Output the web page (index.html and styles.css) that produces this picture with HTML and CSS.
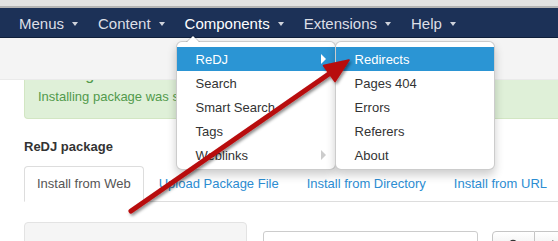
FILE: index.html
```html
<!DOCTYPE html>
<html>
<head>
<meta charset="utf-8">
<link rel="stylesheet" href="styles.css">
</head>
<body>
<div class="topstrip"></div>
<nav class="navbar">
  <ul class="nav">
    <li class="nav-item"><span>Menus</span><b class="caret"></b></li>
    <li class="nav-item"><span>Content</span><b class="caret"></b></li>
    <li class="nav-item open"><span>Components</span><b class="caret"></b>
      <ul class="dropdown">
        <li class="dd-item active has-sub"><span>ReDJ</span><b class="sub-caret"></b>
          <ul class="dropdown submenu">
            <li class="dd-item active"><span>Redirects</span></li>
            <li class="dd-item"><span>Pages 404</span></li>
            <li class="dd-item"><span>Errors</span></li>
            <li class="dd-item"><span>Referers</span></li>
            <li class="dd-item"><span>About</span></li>
          </ul>
        </li>
        <li class="dd-item"><span>Search</span></li>
        <li class="dd-item"><span>Smart Search</span></li>
        <li class="dd-item"><span>Tags</span></li>
        <li class="dd-item has-sub"><span>Weblinks</span><b class="sub-caret"></b></li>
      </ul>
    </li>
    <li class="nav-item"><span>Extensions</span><b class="caret"></b></li>
    <li class="nav-item"><span>Help</span><b class="caret"></b></li>
  </ul>
</nav>
<div class="subhead"></div>
<main class="content">
  <div class="alert">
    <h4 class="alert-heading">Message</h4>
    <p class="alert-text">Installing package was successful.</p>
  </div>
  <h3 class="section-title">ReDJ package</h3>
  <ul class="tabs">
    <li class="tab active"><span>Install from Web</span></li>
    <li class="tab"><span>Upload Package File</span></li>
    <li class="tab"><span>Install from Directory</span></li>
    <li class="tab"><span>Install from URL</span></li>
  </ul>
  <div class="row">
    <div class="well"></div>
    <div class="search">
      <div class="search-input">Search</div>
      <div class="btn-group">
        <div class="btn">
          <svg width="14" height="14" viewBox="0 0 14 14"><circle cx="6" cy="6" r="4.2" fill="none" stroke="#333" stroke-width="2"/><line x1="9" y1="9" x2="12.5" y2="12.5" stroke="#333" stroke-width="2.2"/></svg>
        </div>
        <div class="btn">
          <svg width="12" height="12" viewBox="0 0 12 12"><path d="M2 2 L10 10 M10 2 L2 10" stroke="#333" stroke-width="2.4"/></svg>
        </div>
      </div>
    </div>
  </div>
</main>
<svg class="arrow" width="558" height="241" viewBox="0 0 558 241">
  <defs>
    <filter id="sh" x="-20%" y="-20%" width="140%" height="140%">
      <feDropShadow dx="1.5" dy="2" stdDeviation="1.5" flood-color="#000" flood-opacity="0.45"/>
    </filter>
  </defs>
  <g filter="url(#sh)">
    <line x1="131" y1="211" x2="331" y2="72.5" stroke="#b8090c" stroke-width="5" stroke-linecap="round"/>
    <polygon points="349,60 335,81.5 323.5,65.5" fill="#b8090c" stroke="#b8090c" stroke-width="1.5" stroke-linejoin="round"/>
  </g>
</svg>
</body>
</html>
```
FILE: styles.css
```css
* { box-sizing: border-box; }
html, body { margin: 0; padding: 0; }
body {
  width: 558px;
  height: 241px;
  overflow: hidden;
  position: relative;
  background: #fff;
  font-family: "Liberation Sans", Arial, sans-serif;
  font-size: 13px;
  color: #333;
}
ul { list-style: none; margin: 0; padding: 0; }

.topstrip {
  height: 8px;
  background: #e2e2e2;
  border-bottom: 2px solid #b4b4b4;
}

.navbar {
  height: 30px;
  background: #1c3157;
  border-bottom: 1px solid #0f1f3a;
  position: relative;
  z-index: 5;
}
.nav {
  display: flex;
  height: 100%;
  padding-left: 9px;
}
.nav-item {
  position: relative;
  display: flex;
  align-items: center;
  padding: 1px 10px 0;
  font-size: 15px;
  color: #dcdfe6;
}
.nav-item.open { color: #fff; }
.caret {
  display: inline-block;
  width: 0;
  height: 0;
  margin-left: 8px;
  margin-top: 2px;
  border-left: 3.5px solid transparent;
  border-right: 3.5px solid transparent;
  border-top: 4px solid #cfd3dc;
}

.dropdown {
  position: absolute;
  top: 33px;
  left: 1px;
  width: 160px;
  padding: 5px 0 2px;
  background: #fff;
  border: 1px solid rgba(0,0,0,0.2);
  border-radius: 6px;
  box-shadow: 0 5px 10px rgba(0,0,0,0.2);
  z-index: 10;
}
.nav-item > .dropdown::before {
  content: "";
  position: absolute;
  top: -7px;
  left: 9px;
  border-left: 7px solid transparent;
  border-right: 7px solid transparent;
  border-bottom: 7px solid rgba(0,0,0,0.2);
}
.nav-item > .dropdown::after {
  content: "";
  position: absolute;
  top: -6px;
  left: 10px;
  border-left: 6px solid transparent;
  border-right: 6px solid transparent;
  border-bottom: 6px solid #fff;
}
.dd-item {
  position: relative;
  display: flex;
  align-items: center;
  height: 24px;
  padding: 0 19px;
  font-size: 13px;
  color: #333;
  white-space: nowrap;
}
.dd-item.active {
  background: #2b95d4;
  color: #fff;
}
.sub-caret {
  position: absolute;
  right: 9px;
  top: 7px;
  width: 0;
  height: 0;
  border-top: 5px solid transparent;
  border-bottom: 5px solid transparent;
  border-left: 5px solid #ccc;
}
.dd-item.active .sub-caret { border-left-color: #fff; }
.submenu {
  top: -6px;
  left: 100%;
}

.subhead {
  position: absolute;
  top: 38px;
  left: 0;
  width: 100%;
  height: 42px;
  background: #f4f4f4;
  border-bottom: 1px solid #eaeaea;
  z-index: 3;
}

.content {
  padding: 19px 0 0 24px;
}
.alert {
  background: #dff0d8;
  border: 1px solid #d2e6c3;
  border-right: none;
  border-radius: 4px 0 0 4px;
  padding: 8px 14px 12px 13px;
  color: #529a4c;
}
.alert-heading {
  margin: 0 0 4px;
  font-size: 16px;
  line-height: 18px;
  font-weight: normal;
  color: #529a4c;
}
.alert-text {
  margin: 0;
  line-height: 18px;
  font-size: 13px;
}
.section-title {
  margin: 19px 0 10px;
  font-size: 13px;
  line-height: 18px;
  font-weight: bold;
  color: #333;
}
.tabs {
  display: flex;
  border-bottom: 1px solid #ddd;
}
.tab {
  padding: 8px 12px;
  line-height: 18px;
  margin-right: 2px;
  margin-bottom: -1px;
  border: 1px solid transparent;
  border-radius: 4px 4px 0 0;
  color: #2c8dd2;
  white-space: nowrap;
}
.tab.active {
  color: #555;
  background: #fff;
  border-color: #ddd;
  border-bottom-color: #fff;
}

.row {
  display: flex;
  margin-top: 20px;
}
.well {
  flex: 0 0 223px;
  height: 80px;
  background: #f5f5f5;
  border: 1px solid #e3e3e3;
  border-radius: 4px;
}
.search {
  display: flex;
  flex: 0 0 auto;
  margin-left: 16px;
  margin-top: 9px;
}
.search-input {
  flex: 0 0 215px;
  height: 28px;
  border: 1px solid #ccc;
  border-radius: 3px;
  padding: 6px 8px;
  color: #999;
  font-size: 13px;
}
.btn-group {
  display: flex;
  flex: 0 0 auto;
  margin-left: 14px;
}
.btn {
  flex: 0 0 43px;
  height: 28px;
  display: flex;
  justify-content: center;
  padding-top: 7px;
  border: 1px solid #c5c5c5;
  background: linear-gradient(#fff, #e6e6e6);
}
.btn:first-child { border-radius: 4px 0 0 4px; }
.btn + .btn { border-left: none; }

.arrow {
  position: absolute;
  top: 0;
  left: 0;
  z-index: 20;
  pointer-events: none;
}
```
